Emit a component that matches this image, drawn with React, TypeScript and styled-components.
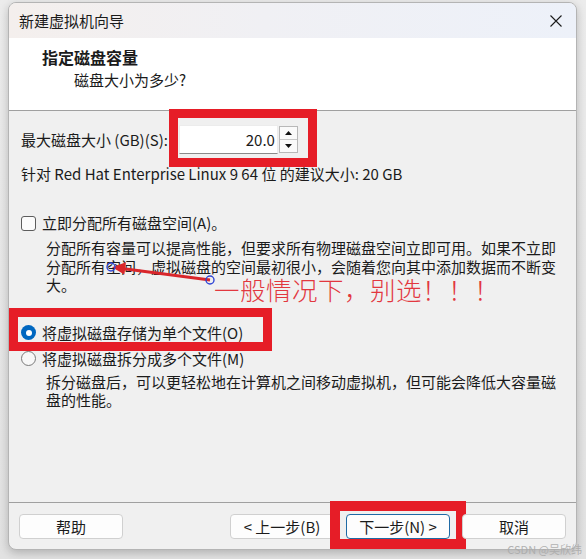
import React from "react";
import styled, { createGlobalStyle } from "styled-components";

const RED = "#e61d27";
const FONT = `"Noto Sans CJK SC", "Noto Sans", sans-serif`;

const GlobalStyle = createGlobalStyle`
  html, body { margin: 0; padding: 0; }
  body {
    background: #e4e4e4;
    font-family: ${FONT};
    color: #1b1b1b;
  }
`;

const Page = styled.div`
  position: relative;
  width: 586px;
  height: 559px;
  box-sizing: border-box;
  padding: 2px 9px 0 8px;
  overflow: hidden;
  background: linear-gradient(to bottom, #ececec 0%, #e2e2e2 100%);
`;

const Window = styled.div`
  position: relative;
  width: 569px;
  height: 548px;
  box-sizing: border-box;
  display: flex;
  flex-direction: column;
  border: 1px solid #b4b4b4;
  border-radius: 8px;
  background: #f0f0f0;
  box-shadow: 0 3px 10px rgba(0, 0, 0, 0.22);
`;

const TitleBar = styled.div`
  height: 35px;
  flex: none;
  display: flex;
  align-items: center;
  justify-content: space-between;
  padding: 0 14px 0 10px;
  border-radius: 7px 7px 0 0;
  background: linear-gradient(to right, #f4efed 0%, #f0f0f4 45%, #edf1f9 100%);
  font-size: 15px;
`;

const TitleText = styled.span`
  line-height: 20px;
`;

const CloseIcon = styled.svg`
  width: 12px;
  height: 12px;
  display: block;
`;

const Header = styled.div`
  flex: none;
  height: 73px;
  box-sizing: border-box;
  background: #ffffff;
  border-bottom: 1px solid #a0a0a0;
  padding-top: 9px;
  display: flex;
  flex-direction: column;
  gap: 3px;
`;

const HeaderTitle = styled.div`
  padding-left: 33px;
  font-size: 16px;
  font-weight: 700;
  line-height: 20px;
`;

const HeaderSub = styled.div`
  padding-left: 65px;
  font-size: 15px;
  line-height: 20px;
`;

const Body = styled.div`
  position: relative;
  flex: 1;
  display: flex;
  flex-direction: column;
  padding: 14px 0 0 12px;
  font-size: 15px;
`;

const SizeRow = styled.div`
  display: flex;
  align-items: center;
  height: 29px;
  gap: 11px;
`;

const Label = styled.span`
  line-height: 20px;
  white-space: nowrap;
`;

const SpinBox = styled.div`
  position: relative;
  display: flex;
  align-items: center;
  gap: 1px;
  height: 29px;
`;

const SpinInput = styled.div`
  width: 99px;
  height: 29px;
  box-sizing: border-box;
  background: #ffffff;
  border: 1px solid #ececec;
  border-bottom: 1px solid #8a8a8a;
  display: flex;
  align-items: center;
  justify-content: flex-end;
  padding-right: 2px;
  font-size: 15px;
`;

const SpinButtons = styled.div`
  width: 19px;
  height: 27px;
  box-sizing: border-box;
  border: 1px solid #b8b8b8;
  background: #fafafa;
  display: flex;
  flex-direction: column;
`;

const SpinHalf = styled.div<{ $top?: boolean }>`
  flex: 1;
  display: flex;
  align-items: center;
  justify-content: center;
  border-bottom: ${(p) => (p.$top ? "1px solid #c8c8c8" : "none")};
`;

const RedFrame = styled.div<{ $t: number; $r: number; $b: number; $l: number; $w: number }>`
  position: absolute;
  top: ${(p) => p.$t}px;
  right: ${(p) => p.$r}px;
  bottom: ${(p) => p.$b}px;
  left: ${(p) => p.$l}px;
  border: ${(p) => p.$w}px solid ${RED};
  pointer-events: none;
`;

const Recommend = styled.div`
  margin-top: 10px;
  line-height: 20px;
`;

const CheckRow = styled.div`
  margin-top: 29px;
  display: flex;
  align-items: center;
  gap: 6px;
  height: 20px;
`;

const CheckBox = styled.span`
  width: 15px;
  height: 15px;
  box-sizing: border-box;
  border: 1px solid #5c5c5c;
  border-radius: 3px;
  background: #fbfbfb;
  flex: none;
`;

const Desc = styled.div<{ $mt: number }>`
  position: relative;
  margin-top: ${(p) => p.$mt}px;
  padding-left: 25px;
  font-size: 15px;
  line-height: 18.5px;
  white-space: nowrap;
`;

const RadioRow = styled.div<{ $mt: number }>`
  position: relative;
  margin-top: ${(p) => p.$mt}px;
  display: flex;
  align-items: center;
  gap: 6px;
  height: 22px;
`;

const Radio = styled.span<{ $on?: boolean }>`
  width: 15px;
  height: 15px;
  box-sizing: border-box;
  border-radius: 50%;
  flex: none;
  background: ${(p) => (p.$on ? "#0067c0" : "#f8f8f8")};
  border: ${(p) => (p.$on ? "none" : "1px solid #7a7a7a")};
  display: flex;
  align-items: center;
  justify-content: center;
`;

const RadioDot = styled.span`
  width: 6px;
  height: 6px;
  border-radius: 50%;
  background: #ffffff;
`;

const RadioFrame = styled.div`
  position: absolute;
  top: -14px;
  bottom: -7px;
  left: -12px;
  width: 263px;
  box-sizing: border-box;
  border: 9px solid ${RED};
  pointer-events: none;
`;

const ArrowSvg = styled.svg`
  position: absolute;
  left: 79px;
  top: 19px;
  width: 125px;
  height: 40px;
  overflow: visible;
`;

const Remark = styled.span`
  position: absolute;
  left: 193px;
  top: 35px;
  font-size: 25.5px;
  line-height: 30px;
  color: #e2373f;
  letter-spacing: 0.5px;
  font-weight: 300;
`;

const Footer = styled.div`
  flex: none;
  height: 47px;
  box-sizing: border-box;
  border-top: 1px solid #a0a0a0;
  padding: 11px 10px 0 10px;
  display: flex;
  align-items: flex-start;
  justify-content: space-between;
`;

const ButtonGroup = styled.div`
  display: flex;
  gap: 12px;
`;

const Button = styled.div<{ $primary?: boolean }>`
  position: relative;
  width: 104px;
  height: 25px;
  box-sizing: border-box;
  border: 1px solid ${(p) => (p.$primary ? "#1f6aa5" : "#d0d0d0")};
  border-radius: 4px;
  background: #fdfdfd;
  display: flex;
  align-items: center;
  justify-content: center;
  font-size: 15px;
  line-height: 20px;
  white-space: nowrap;
`;

const Watermark = styled.span`
  position: absolute;
  right: 4px;
  bottom: 2px;
  font-size: 11px;
  color: rgba(170, 170, 170, 0.9);
  font-family: ${FONT};
`;

export default function App() {
  return (
    <>
      <GlobalStyle />
      <Page>
        <Window>
          <TitleBar>
            <TitleText>新建虚拟机向导</TitleText>
            <CloseIcon viewBox="0 0 12 12">
              <path d="M0.5 0.5 L11.5 11.5 M11.5 0.5 L0.5 11.5" stroke="#1b1b1b" strokeWidth="1.1" fill="none" />
            </CloseIcon>
          </TitleBar>
          <Header>
            <HeaderTitle>指定磁盘容量</HeaderTitle>
            <HeaderSub>磁盘大小为多少?</HeaderSub>
          </Header>
          <Body>
            <SizeRow>
              <Label>最大磁盘大小 (GB)(S):</Label>
              <SpinBox>
                <SpinInput>20.0</SpinInput>
                <SpinButtons>
                  <SpinHalf $top>
                    <svg width="7" height="4" viewBox="0 0 7 4">
                      <path d="M0 4 L3.5 0 L7 4 Z" fill="#111" />
                    </svg>
                  </SpinHalf>
                  <SpinHalf>
                    <svg width="7" height="4" viewBox="0 0 7 4">
                      <path d="M0 0 L3.5 4 L7 0 Z" fill="#111" />
                    </svg>
                  </SpinHalf>
                </SpinButtons>
                <RedFrame $t={-16} $r={-19} $b={-13} $l={-10} $w={9} />
              </SpinBox>
            </SizeRow>
            <Recommend>针对 Red Hat Enterprise Linux 9 64 位 的建议大小: 20 GB</Recommend>
            <CheckRow>
              <CheckBox />
              <Label>立即分配所有磁盘空间(A)。</Label>
            </CheckRow>
            <Desc $mt={6}>
              分配所有容量可以提高性能，但要求所有物理磁盘空间立即可用。如果不立即
              <br />
              分配所有空间，虚拟磁盘的空间最初很小，会随着您向其中添加数据而不断变
              <br />
              大。
              <ArrowSvg viewBox="0 0 125 40">
                <line x1="110" y1="22" x2="22" y2="10.6" stroke="#d9262b" strokeWidth="3" />
                <polygon points="12,9.3 26,4.2 24.4,16.6" fill="#d9262b" />
                <circle cx="11" cy="9" r="4" fill="none" stroke="#2f45d6" strokeWidth="1.4" />
                <circle cx="110" cy="22" r="4" fill="none" stroke="#2f45d6" strokeWidth="1.4" />
              </ArrowSvg>
              <Remark>一般情况下，别选！！！</Remark>
            </Desc>
            <RadioRow $mt={27}>
              <Radio $on>
                <RadioDot />
              </Radio>
              <Label>将虚拟磁盘存储为单个文件(O)</Label>
              <RadioFrame />
            </RadioRow>
            <RadioRow $mt={4}>
              <Radio />
              <Label>将虚拟磁盘拆分成多个文件(M)</Label>
            </RadioRow>
            <Desc $mt={3}>
              拆分磁盘后，可以更轻松地在计算机之间移动虚拟机，但可能会降低大容量磁
              <br />
              盘的性能。
            </Desc>
          </Body>
          <Footer>
            <Button>帮助</Button>
            <ButtonGroup>
              <Button>&lt; 上一步(B)</Button>
              <Button $primary>
                下一步(N) &gt;
                <RedFrame $t={-14} $r={-17} $b={-11} $l={-17} $w={10} />
              </Button>
              <Button>取消</Button>
            </ButtonGroup>
          </Footer>
        </Window>
        <Watermark>CSDN @吴欣纬</Watermark>
      </Page>
    </>
  );
}
